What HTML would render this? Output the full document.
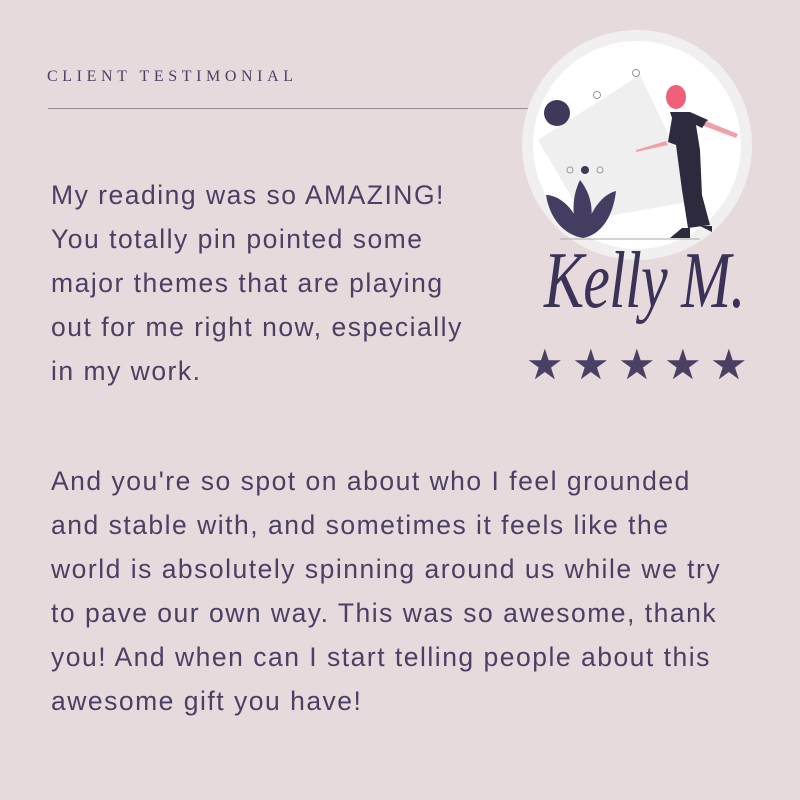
<!DOCTYPE html>
<html><head><meta charset="utf-8"><style>
body{margin:0;width:800px;height:800px;background:#e7dadc;position:relative;overflow:hidden;font-family:"Liberation Sans",sans-serif;color:#4a4063}
.t{position:absolute;left:47px;top:68px;font-family:"Liberation Serif",serif;font-size:16px;letter-spacing:4.6px;color:#4a4063}
.line{position:absolute;left:48px;top:108px;width:490px;height:1px;background:#9a8f98}
.p{position:absolute;left:51px;font-size:26.5px;line-height:44px;font-weight:300;color:#4a4063;letter-spacing:1.5px;white-space:nowrap}
.name{position:absolute;left:544px;top:236px;font-family:"Liberation Serif",serif;font-style:italic;font-size:80px;color:#3a3358;white-space:nowrap;letter-spacing:-1px;transform:scaleX(0.75);transform-origin:left}
.stars{position:absolute;left:526px;top:340px;font-size:42px;color:#4a4063}
.stars span{position:absolute;top:0}
</style></head><body>
<div class="t">CLIENT TESTIMONIAL</div>
<div class="line"></div>
<svg style="position:absolute;left:0;top:0" width="800" height="800">
<circle cx="637" cy="145" r="115" fill="#f1efef"/>
<circle cx="637" cy="145" r="104" fill="#fff"/>
<polygon points="538,140 640,75 700,200 585,220" fill="#f0eff0"/>
<circle cx="557" cy="113" r="13" fill="#3f3858"/>
<circle cx="597" cy="95" r="3.5" fill="none" stroke="#999" stroke-width="1"/>
<circle cx="636" cy="73" r="3.5" fill="none" stroke="#999" stroke-width="1"/>
<circle cx="570" cy="170" r="3" fill="none" stroke="#999"/>
<circle cx="585" cy="170" r="4" fill="#3f3858"/>
<circle cx="600" cy="170" r="3" fill="none" stroke="#999"/>
<path d="M580 180 C570 200 572 225 583 238 C594 225 596 200 580 180Z" fill="#453c62"/>
<path d="M546 195 C560 195 578 210 583 238 C565 235 550 220 546 195Z" fill="#453c62"/>
<path d="M616 191 C600 195 588 215 583 238 C600 235 613 218 616 191Z" fill="#453c62"/>
<line x1="560" y1="239" x2="700" y2="239" stroke="#aaa" stroke-width="1"/>
<ellipse cx="676" cy="97" rx="10" ry="12" fill="#f1607a"/>
<path d="M670 112 L690 112 L708 120 L702 128 L696 125 L700 150 L702 195 L710 225 L688 228 L682 190 L676 145 L668 142 L672 118Z" fill="#2d2a3e"/>
<path d="M668 145 L636 152 L636 150 L666 141Z" fill="#f0a0a8"/>
<path d="M706 121 L738 134 L736 138 L704 126Z" fill="#f0a0a8"/>
<path d="M682 228 L670 238 L690 238 L690 228Z M700 226 L712 232 L712 226Z" fill="#2d2a3e"/>
</svg>
<div class="p" style="top:173px">My reading was so AMAZING!<br>You totally pin pointed some<br>major themes that are playing<br>out for me right now, especially<br>in my work.</div>
<div class="p" style="top:459px">And you're so spot on about who I feel grounded<br>and stable with, and sometimes it feels like the<br>world is absolutely spinning around us while we try<br>to pave our own way. This was so awesome, thank<br>you! And when can I start telling people about this<br>awesome gift you have!</div>
<div class="name">Kelly M.</div>
<div class="stars"><span style="left:0">★</span><span style="left:46px">★</span><span style="left:92px">★</span><span style="left:138px">★</span><span style="left:184px">★</span></div>
</body></html>
